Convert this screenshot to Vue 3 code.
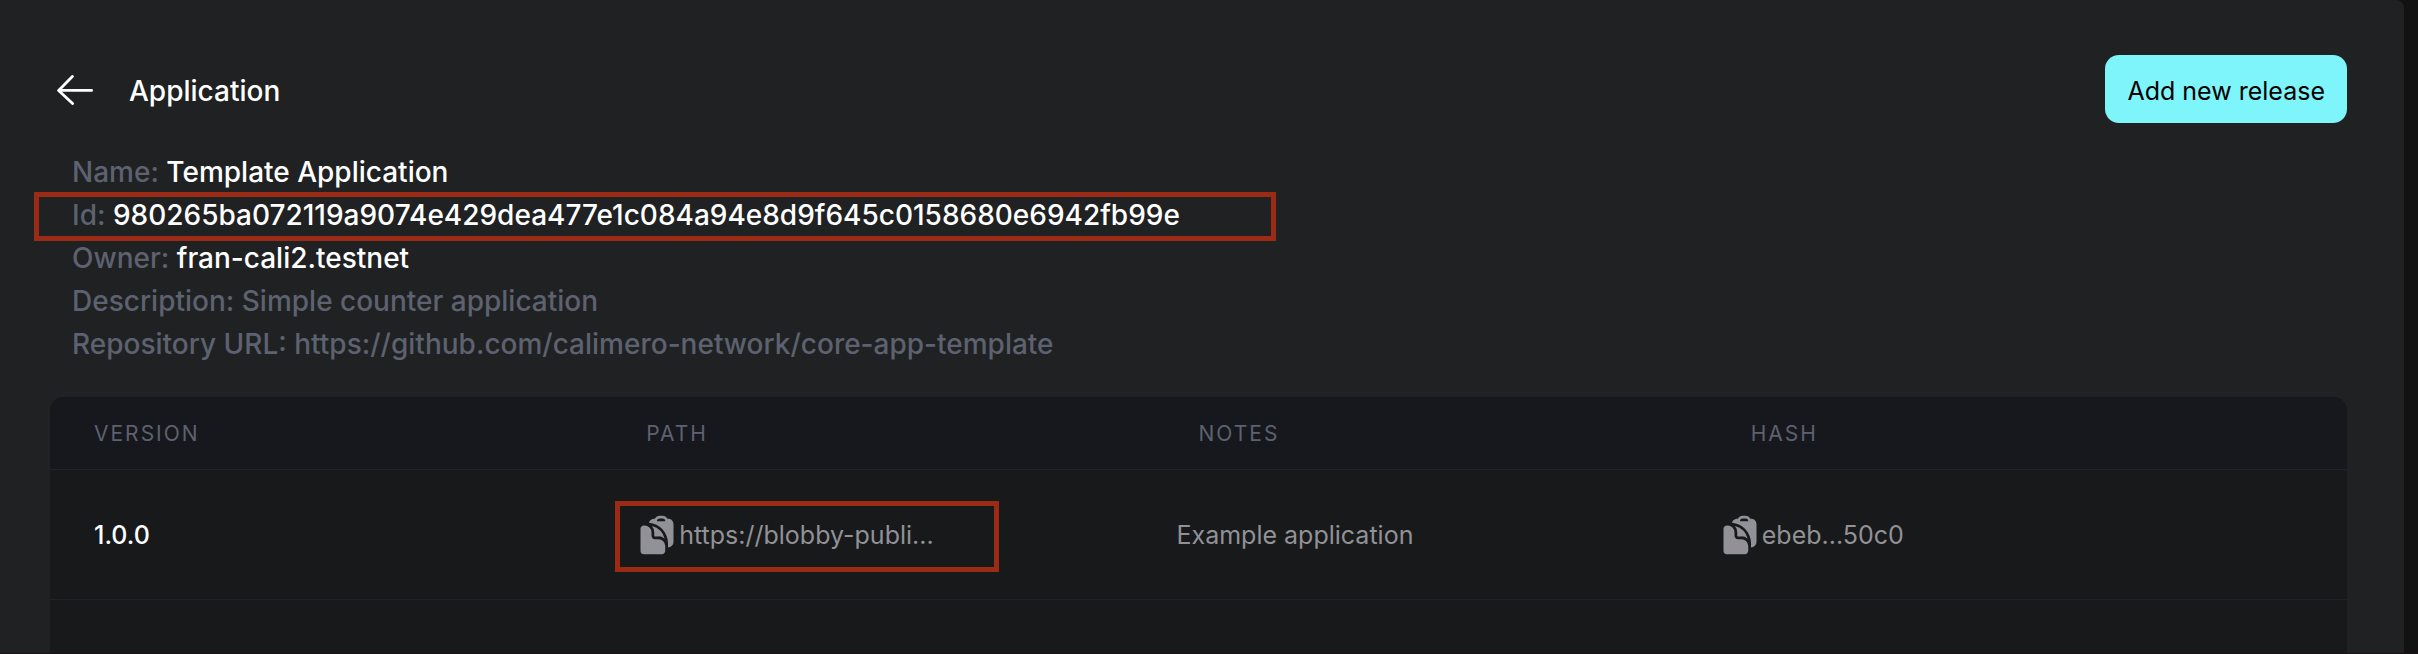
<script setup>
const details = [
  { label: 'Name', value: 'Template Application', strong: true },
  { label: 'Id', value: '980265ba072119a9074e429dea477e1c084a94e8d9f645c0158680e6942fb99e', strong: true, framed: true },
  { label: 'Owner', value: 'fran-cali2.testnet', strong: true },
  { label: 'Description', value: 'Simple counter application' },
  { label: 'Repository URL', value: 'https://github.com/calimero-network/core-app-template' },
]

const columns = ['Version', 'Path', 'Notes', 'Hash']

const releases = [
  { version: '1.0.0', path: 'https://blobby-publi...', notes: 'Example application', hash: 'ebeb...50c0' },
]

const clipboardPaths = [
  'M17.663 3.118c.225.015.45.032.673.05C19.876 3.298 21 4.604 21 6.109v9.642a3 3 0 0 1-3 3V16.5c0-5.922-4.576-10.775-10.384-11.217.324-1.132 1.3-2.01 2.548-2.114.224-.019.448-.036.673-.051A3 3 0 0 1 13.5 1.5H15a3 3 0 0 1 2.663 1.618ZM12 4.5A1.5 1.5 0 0 1 13.5 3H15a1.5 1.5 0 0 1 1.5 1.5H12Z',
  'M3 8.625c0-1.036.84-1.875 1.875-1.875h.375A3.75 3.75 0 0 1 9 10.5v1.875c0 1.036.84 1.875 1.875 1.875h1.875A3.75 3.75 0 0 1 16.5 18v2.625c0 1.035-.84 1.875-1.875 1.875h-9.75A1.875 1.875 0 0 1 3 20.625v-12Z',
  'M10.5 10.5a5.23 5.23 0 0 0-1.279-3.434 9.768 9.768 0 0 1 6.963 6.963 5.23 5.23 0 0 0-3.434-1.279h-1.875a.375.375 0 0 1-.375-.375V10.5Z',
]
</script>

<template>
  <div class="page">
    <main class="panel">
      <header class="top">
        <button class="back" type="button" aria-label="Back">
          <svg width="40" height="32" viewBox="0 0 40 32" fill="none" stroke="#fff" stroke-width="2.8" stroke-linecap="round" stroke-linejoin="round">
            <path d="M17.4 3.4 3.6 17.4l14 13.2M4 17.4h32.6" />
          </svg>
        </button>
        <h1>Application</h1>
        <button class="add" type="button">Add new release</button>
      </header>

      <section class="details">
        <p v-for="item in details" :key="item.label" :class="{ framed: item.framed }">
          {{ item.label }}: <span :class="{ strong: item.strong }">{{ item.value }}</span>
        </p>
      </section>

      <table class="releases">
        <thead>
          <tr>
            <th v-for="column in columns" :key="column" scope="col">{{ column }}</th>
          </tr>
        </thead>
        <tbody>
          <tr v-for="release in releases" :key="release.version">
            <td class="version">{{ release.version }}</td>
            <td>
              <div class="copyable framed">
                <button class="copy" type="button" aria-label="Copy path">
                  <svg viewBox="0 0 24 24" fill="currentColor" fill-rule="evenodd">
                    <path v-for="d in clipboardPaths" :key="d" :d="d" />
                  </svg>
                </button>
                <span>{{ release.path }}</span>
              </div>
            </td>
            <td>{{ release.notes }}</td>
            <td>
              <div class="copyable">
                <button class="copy" type="button" aria-label="Copy hash">
                  <svg viewBox="0 0 24 24" fill="currentColor" fill-rule="evenodd">
                    <path v-for="d in clipboardPaths" :key="d" :d="d" />
                  </svg>
                </button>
                <span>{{ release.hash }}</span>
              </div>
            </td>
          </tr>
        </tbody>
      </table>
    </main>
  </div>
</template>

<style>
body {
  margin: 0;
  background: #121212;
}
</style>

<style scoped>
.page {
  box-sizing: border-box;
  display: flex;
  min-height: 100vh;
  padding-right: 14px;
  border-bottom: 1px solid #1a1114;
  background: #121212;
  font-family: Inter, "Liberation Sans", sans-serif;
}

.panel {
  box-sizing: border-box;
  display: flex;
  flex: 1;
  flex-direction: column;
  padding: 55px 57px 0 50px;
  border-top-right-radius: 8px;
  background: #202122;
}

button {
  padding: 0;
  border: 0;
  background: none;
  color: inherit;
  font: inherit;
  cursor: pointer;
}

svg {
  display: block;
}

.top {
  display: flex;
  align-items: center;
  height: 68px;
}

.back {
  margin: 0 34px 0 5px;
}

h1 {
  flex: 1;
  margin: 0;
  padding-top: 4px;
  color: #fff;
  font-size: 28px;
  font-weight: 500;
  line-height: 36px;
}

.add {
  height: 68px;
  padding: 4px 22px 0;
  border-radius: 14px;
  background: #7ef5fb;
  color: #000;
  font-size: 25px;
  font-weight: 400;
}

.details {
  display: flex;
  flex-direction: column;
  align-items: flex-start;
  padding: 28px 0 31px 22px;
}

.details p {
  margin: 0;
  color: #5d6170;
  font-size: 28px;
  font-weight: 500;
  line-height: 43px;
}

.strong {
  color: #fff;
}

.framed {
  position: relative;
}

.framed::after {
  position: absolute;
  border: 5px solid #9c2b16;
  content: "";
  pointer-events: none;
}

.details .framed::after {
  inset: -2px -96px -4px -38px;
}

.releases {
  display: flex;
  flex: 1;
  flex-direction: column;
  border-radius: 14px 14px 0 0;
  background: #17191a;
  overflow: hidden;
  text-align: left;
}

.releases tr {
  display: grid;
  grid-template-columns: repeat(4, minmax(0, 1fr));
  align-items: center;
  border-bottom: 1px solid #212328;
}

thead,
tbody {
  display: block;
}

thead tr {
  height: 72px;
  padding: 0 44px;
  background: #17181d;
}

tbody tr {
  height: 129px;
  padding: 0 88px 0 44px;
}

th,
td {
  padding: 0;
}

th {
  color: #5d6170;
  font-size: 21px;
  font-weight: 400;
  letter-spacing: 2px;
  text-transform: uppercase;
}

td {
  color: #929197;
  font-size: 25px;
  font-weight: 400;
}

.version {
  color: #fff;
  font-weight: 500;
}

.copyable {
  display: flex;
  align-items: center;
  width: fit-content;
}

.copyable.framed::after {
  inset: -12px -65px -15px -20px;
}

.copy svg {
  width: 44px;
  height: 44px;
}
</style>
